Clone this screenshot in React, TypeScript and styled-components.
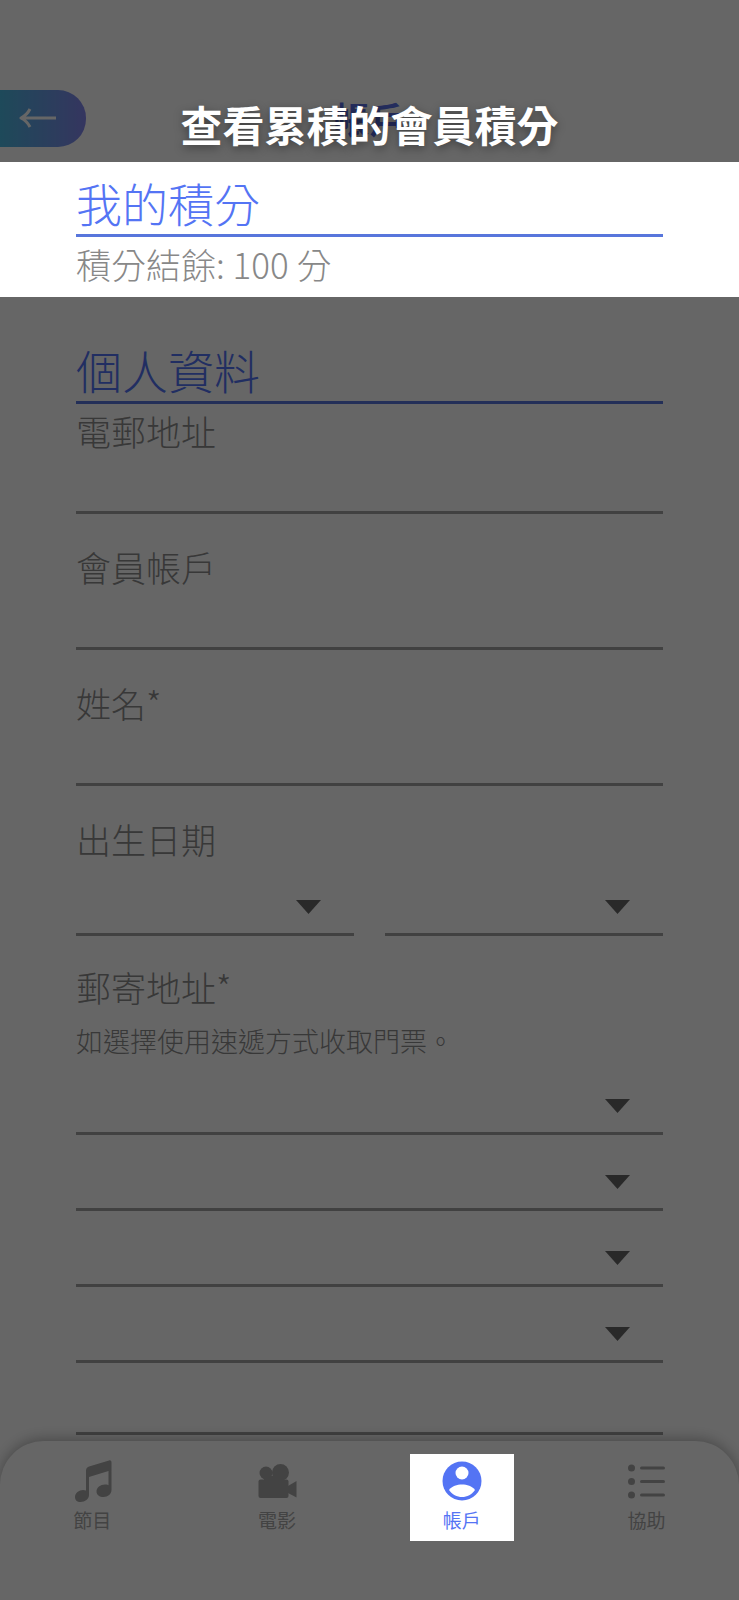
import React from 'react';
import styled, { createGlobalStyle, css } from 'styled-components';

const Global = createGlobalStyle`
  * { box-sizing: border-box; }
  body {
    margin: 0;
    background: #fff;
    font-family: 'Noto Sans CJK TC', 'Noto Sans', sans-serif;
    font-weight: 300;
  }
`;

const Screen = styled.div`
  position: relative;
  display: flex;
  flex-direction: column;
  min-height: 100vh;
  background: #fff;
`;

const Dimmer = styled.div`
  position: absolute;
  inset: 0;
  z-index: 1;
  background: rgba(0, 0, 0, 0.6);
`;

const spotlight = css`
  position: relative;
  z-index: 2;
  background: #fff;
`;

const Header = styled.header`
  display: grid;
  grid-template-columns: 86px 1fr 86px;
  align-items: center;
  height: 162px;
  padding-top: 74px;
`;

const BackButton = styled.button`
  display: flex;
  align-items: center;
  height: 57px;
  padding: 0 0 0 19px;
  border: 0;
  border-radius: 0 28px 28px 0;
  background: linear-gradient(90deg, #4cb8e0, #8486ee);
`;

const Title = styled.h1`
  margin: 0;
  color: #5a70e8;
  font-size: 36px;
  line-height: 58px;
  font-weight: 700;
  text-align: center;
`;

const Caption = styled.p`
  position: absolute;
  top: 94px;
  left: 0;
  right: 0;
  z-index: 3;
  margin: 0;
  color: #fff;
  font-size: 42px;
  line-height: 60px;
  font-weight: 700;
  text-align: center;
  text-shadow: 0 3px 10px rgba(0, 0, 0, 0.4);
`;

const Section = styled.section`
  padding: 12px 76px 6px;
  ${spotlight}
`;

const Heading = styled.h2`
  margin: 0;
  padding-bottom: 4px;
  border-bottom: 3px solid #5876dc;
  color: #5474f4;
  font-size: 46px;
  line-height: 56px;
  font-weight: 300;
`;

const Balance = styled.p`
  margin: 0;
  color: #888;
  font-size: 35px;
  line-height: 54px;
`;

const Form = styled.form`
  display: flex;
  flex-direction: column;
  padding: 12px 76px 6px;
  margin-top: 32px;
`;

const Field = styled.div`
  display: flex;
  flex-direction: column;
  height: 136px;
`;

const FieldLabel = styled.label`
  color: #8c8c8c;
  font-size: 35px;
  line-height: 54px;
`;

const TextInput = styled.input`
  width: 100%;
  height: 56px;
  padding: 0;
  border: 0;
  border-bottom: 3px solid #a2a2a2;
  border-radius: 0;
  background: transparent;
  font: inherit;
  font-size: 35px;
`;

const Group = styled.fieldset`
  min-width: 0;
  margin: 0;
  padding: 0;
  border: 0;
`;

const Legend = styled.legend`
  padding: 0;
  color: #8c8c8c;
  font-size: 35px;
  line-height: 54px;
`;

const Hint = styled.p`
  margin: 0;
  color: #8c8c8c;
  font-size: 27px;
  line-height: 54px;
`;

const DateRow = styled.div`
  display: grid;
  grid-template-columns: 1fr 1fr;
  gap: 31px;
  padding: 10px 0 24px;
`;

const AddressLines = styled.div`
  display: grid;
  gap: 16px;
  padding-top: 7px;
`;

const SelectBox = styled.div`
  display: grid;
  height: 60px;
  border-bottom: 3px solid #a2a2a2;

  > * { grid-area: 1 / 1; }

  > svg {
    justify-self: end;
    align-self: end;
    margin: 0 33px 19px 0;
    pointer-events: none;
  }
`;

const Select = styled.select`
  width: 100%;
  height: 100%;
  padding: 0 64px 0 0;
  border: 0;
  appearance: none;
  background: transparent;
  font: inherit;
  font-size: 35px;
`;

const TabBar = styled.nav`
  flex: 1 0 159px;
  display: grid;
  grid-template-columns: repeat(4, 1fr);
  justify-items: center;
  align-items: start;
  padding-top: 13px;
  border-radius: 44px 44px 0 0;
  background: #fff;
  box-shadow: 0 -2px 14px rgba(0, 0, 0, 0.3);
`;

const Tab = styled.a<{ $lit?: boolean }>`
  display: flex;
  flex-direction: column;
  align-items: center;
  width: 104px;
  height: 87px;
  padding-top: 5px;
  color: ${(p) => (p.$lit ? '#5474f4' : '#a8a8a8')};
  font-size: 19px;
  line-height: 28px;
  font-weight: 400;
  text-decoration: none;
  ${(p) => p.$lit && spotlight}

  > svg { margin-bottom: 3px; }
`;

const MusicIcon = () => (
  <svg width="44" height="44" viewBox="-2 0 44 44" fill="currentColor" aria-hidden="true">
    <path d="M14 11.5C14 9.500 15 8.200 17 7.500L37 1.500C38.500 1 39.500 2 39.500 3.500V31C39.500 35 36 38 31.500 38C27.500 38 24.500 36 24.500 32.500C24.500 28 29 25 34 25.500C35 25.500 36 26 36.500 26.300V12L17 18V36C17 40 13 43 8.500 43C5 43 3 41 3 38C3 34 7 31 11 31C12.200 31 13.200 31.200 14 31.500Z" />
  </svg>
);

const CameraIcon = () => (
  <svg width="44" height="44" viewBox="0 0 44 44" fill="currentColor" aria-hidden="true">
    <circle cx="11" cy="14" r="6.500" />
    <circle cx="25.500" cy="13.500" r="8.500" />
    <path d="M9 17H28V23H9Z" />
    <rect x="3.500" y="20.500" width="30" height="18.500" rx="2" />
    <path d="M33 27L41.500 22V38.500L33 34Z" />
  </svg>
);

const AccountIcon = () => (
  <svg width="44" height="44" viewBox="0 0 44 44" aria-hidden="true">
    <circle cx="22" cy="22" r="19.500" fill="currentColor" />
    <circle cx="22" cy="14" r="6.500" fill="#fff" />
    <path d="M9 31C12 27 17 25.500 22 25.500S32 27 35 31C32 35.500 27 38 22 38S12 35.500 9 31Z" fill="#fff" />
  </svg>
);

const ListIcon = () => (
  <svg width="44" height="44" viewBox="0 0 44 44" fill="currentColor" aria-hidden="true">
    {[9, 22.5, 36].map((y) => (
      <g key={y}>
        <circle cx="6.500" cy={y} r="3.500" />
        <rect x="15" y={y - 1.5} width="25" height="3" rx="1.500" />
      </g>
    ))}
  </svg>
);

const Caret = () => (
  <svg width="25" height="14" viewBox="0 0 25 14" aria-hidden="true">
    <path d="M0 0H25L12.500 14Z" fill="#686868" />
  </svg>
);

const Dropdown = ({ label }: { label: string }) => (
  <SelectBox>
    <Select aria-label={label} />
    <Caret />
  </SelectBox>
);

const fields = [
  { id: 'email', label: '電郵地址', type: 'email' },
  { id: 'member', label: '會員帳戶', type: 'text' },
  { id: 'name', label: '姓名*', type: 'text' },
];

const tabs = [
  { label: '節目', Icon: MusicIcon },
  { label: '電影', Icon: CameraIcon },
  { label: '帳戶', Icon: AccountIcon, lit: true },
  { label: '協助', Icon: ListIcon },
];

export default function App() {
  return (
    <Screen>
      <Global />
      <Header>
        <BackButton type="button" aria-label="返回">
          <svg width="38" height="22" viewBox="0 0 38 22" fill="none" stroke="#fff" strokeWidth="3" strokeLinejoin="round" aria-hidden="true">
            <path d="M37 11H2M11 2Q8 8 2 11Q8 14 11 20" />
          </svg>
        </BackButton>
        <Title>帳戶</Title>
      </Header>
      <Section>
        <Heading>我的積分</Heading>
        <Balance>積分結餘: 100 分</Balance>
      </Section>
      <Form>
        <Heading>個人資料</Heading>
        {fields.map((f) => (
          <Field key={f.id}>
            <FieldLabel htmlFor={f.id}>{f.label}</FieldLabel>
            <TextInput id={f.id} type={f.type} />
          </Field>
        ))}
        <Group>
          <Legend>出生日期</Legend>
          <DateRow>
            <Dropdown label="月份" />
            <Dropdown label="年份" />
          </DateRow>
        </Group>
        <Group>
          <Legend>郵寄地址*</Legend>
          <Hint>如選擇使用速遞方式收取門票。</Hint>
          <AddressLines>
            <Dropdown label="國家" />
            <Dropdown label="城市" />
            <Dropdown label="地區" />
            <Dropdown label="分區" />
            <TextInput aria-label="地址" />
          </AddressLines>
        </Group>
      </Form>
      <TabBar>
        {tabs.map(({ label, Icon, lit }) => (
          <Tab key={label} href="#" $lit={lit} aria-current={lit ? 'page' : undefined}>
            <Icon />
            {label}
          </Tab>
        ))}
      </TabBar>
      <Dimmer />
      <Caption>查看累積的會員積分</Caption>
    </Screen>
  );
}
